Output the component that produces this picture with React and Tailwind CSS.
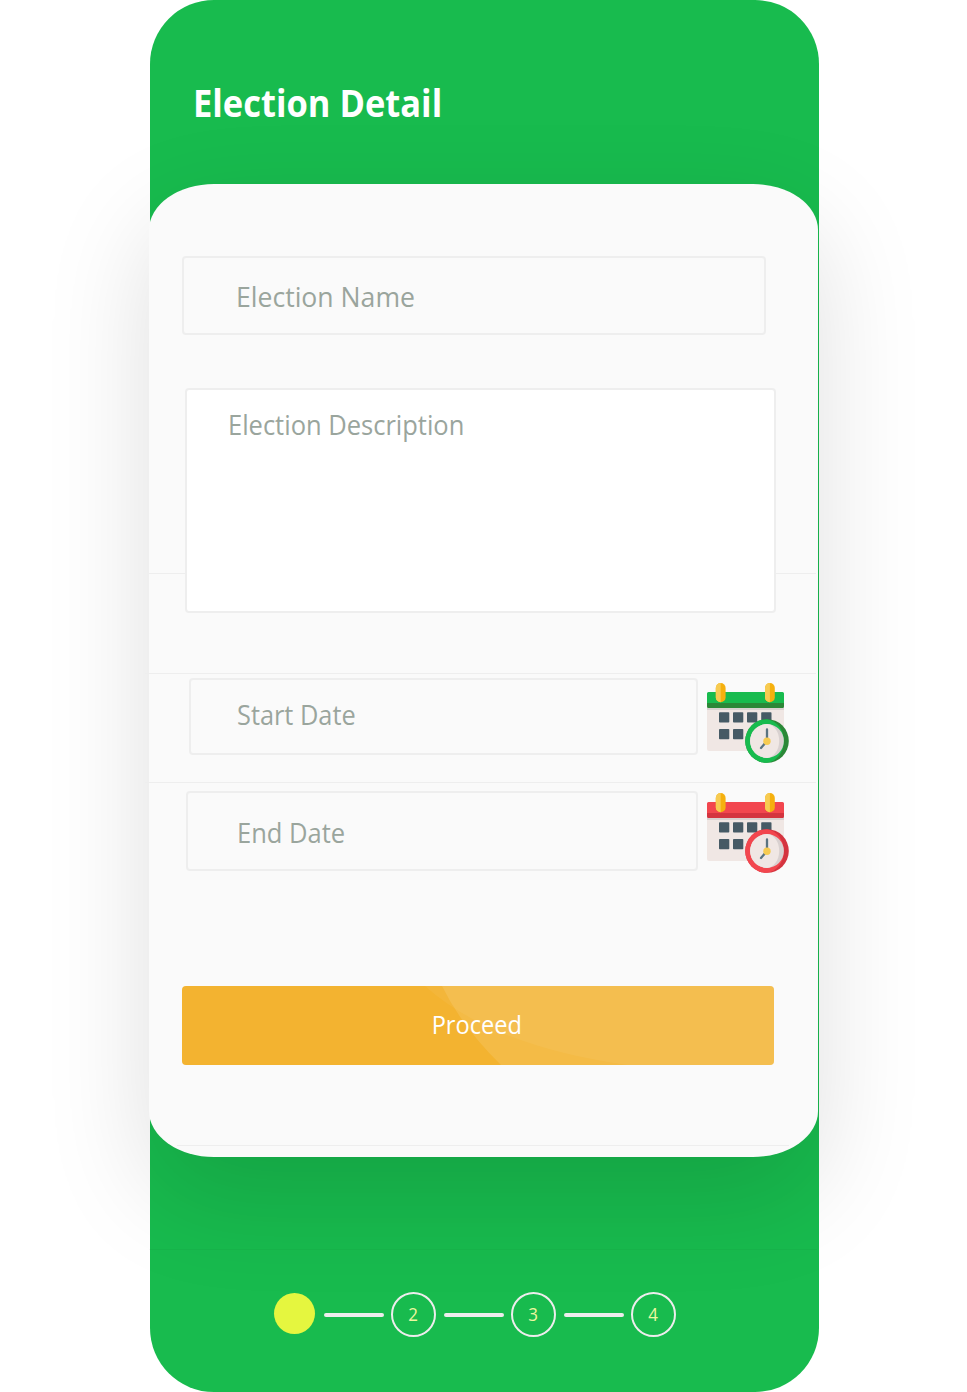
const palettes = {
  green: { main: "#18bb4e", dark: "#2b8737" },
  red: { main: "#f2464e", dark: "#d4343f" },
};

function CalendarIcon({ tone }) {
  const { main, dark } = palettes[tone];
  const cells = [
    [12, 29.3], [26, 29.3], [40, 29.3], [54.2, 29.3],
    [12, 46], [26, 46],
  ];
  return (
    <svg width="82" height="80" viewBox="0 0 82 80" className="shrink-0">
      <path d="M0 24h77v44H2a2 2 0 0 1-2-2z" fill="#f0e7e4" />
      <path d="M0 24h77v3H0z" fill="#d9d1d0" />
      <path d="M1.500 9h74A1.500 1.500 0 0 1 77 10.500V22H0V10.500A1.500 1.500 0 0 1 1.500 9z" fill={main} />
      <path d="M0 20h77v3.500a1.500 1.500 0 0 1-1.500 1.500h-74A1.500 1.500 0 0 1 0 23.500z" fill={dark} />
      {[8.8, 58].map((x) => (
        <g key={x}>
          <rect x={x} y="0" width="9.800" height="19.300" rx="4.900" fill="#f5b00e" />
          <path d={`M${x + 4.9} 0a4.900 4.900 0 0 0-4.900 4.900v9.500a4.900 4.900 0 0 0 4.900 4.900z`} fill="#f7cb51" />
        </g>
      ))}
      {cells.map(([x, y]) => (
        <rect key={`${x}-${y}`} x={x} y={y} width="10.300" height="10.300" rx="0.800" fill="#465a65" />
      ))}
      <circle cx="60" cy="58" r="21.800" fill={dark} />
      <path d="M60 36.200a21.800 21.800 0 1 0 0 43.600c9-1 17-10 17-21.800s-8-20.800-17-21.800z" fill={main} />
      <circle cx="60" cy="58" r="16.900" fill="#d9d1d0" />
      <path d="M60 41.100a16.900 16.900 0 1 0 0 33.800c7-.5 12.200-8 12.200-16.900S67 41.600 60 41.100z" fill="#f0e7e4" />
      <path d="M60 46.500V58l-6 7" fill="none" stroke="#5a7380" strokeWidth="2.300" strokeLinecap="round" />
      <circle cx="60" cy="58.200" r="3.700" fill="#f7cb51" />
    </svg>
  );
}

function Step({ number }) {
  return (
    <>
      <div className="ml-2 h-1 w-[60px] rounded-full bg-[#ededed]" />
      <div className="ml-[7px] flex h-[45px] w-[45px] items-center justify-center rounded-full border-2 border-[#ededed] pb-0.5 text-[18px] leading-none text-[#eef7a0]">
        <span className="inline-block origin-center scale-x-[0.94]">{number}</span>
      </div>
    </>
  );
}

function Divider({ className }) {
  return <div className={`absolute h-px bg-[#eeeeee] ${className}`} />;
}

export default function App() {
  return (
    <div className="h-[1392px] w-[967px] overflow-hidden bg-white font-['Open_Sans',sans-serif]">
      <main className="ml-[149.5px] flex h-[1391.5px] w-[669.5px] flex-col rounded-[64px] bg-[#18bb4e]">
        <header className="h-[183.5px] pl-[43px] pt-[78px]">
          <h1 className="w-max origin-left scale-x-[0.932] whitespace-nowrap text-[37px] font-bold leading-[50px] text-white">Election Detail</h1>
        </header>

        <section className="relative -ml-px h-[973.5px] w-[669.5px] shrink-0 rounded-[65px/46px] bg-[#fafafa] pt-[72.5px] shadow-[0_38px_106px_rgba(0,0,0,0.13)]">
          <Divider className="left-0 top-[389.5px] w-[667px]" />
          <Divider className="-left-1 top-[489.5px] w-[671px]" />
          <Divider className="-left-1 top-[598.5px] w-[671px]" />
          <Divider className="left-[28px] top-[961.5px] w-[612px]" />

          <div className="ml-[33px] flex h-[79px] w-[584px] items-center rounded-[4px] border-2 border-[#eeeeee] pl-[52px] pt-px text-[28px] leading-none text-[#9aa59d]">
            <span className="origin-left scale-x-[0.95] whitespace-nowrap">Election Name</span>
          </div>

          <div className="relative ml-9 mt-[53px] h-[225px] w-[591px] rounded-[4px] border-2 border-[#eeeeee] bg-white pl-[41px] pt-[19px] text-[27px] leading-8 text-[#9aa59d]">
            <span className="inline-block origin-left scale-x-[0.944] whitespace-nowrap">Election Description</span>
          </div>

          <div className="ml-10 mt-[65px] flex items-start">
            <div className="flex h-[77px] w-[509px] items-center rounded-[4px] border-2 border-[#eeeeee] pb-1 pl-[46px] text-[27px] leading-none text-[#9aa59d]">
              <span className="origin-left scale-x-[0.938] whitespace-nowrap">Start Date</span>
            </div>
            <div className="ml-[9px] mt-[5px]"><CalendarIcon tone="green" /></div>
          </div>

          <div className="ml-[37px] mt-7 flex items-start">
            <div className="flex h-20 w-[512px] items-center rounded-[4px] border-2 border-[#eeeeee] pl-[49px] pt-0.5 text-[27px] leading-none text-[#9aa59d]">
              <span className="origin-left scale-x-[0.945] whitespace-nowrap">End Date</span>
            </div>
            <div className="ml-[9px] mt-[2px]"><CalendarIcon tone="red" /></div>
          </div>

          <button className="relative ml-[33px] mt-[113px] flex h-[79px] w-[592px] items-center justify-center overflow-hidden rounded-[4px] bg-[#f3b330] text-[25px] leading-none text-white">
            <svg width="592" height="79" viewBox="0 0 592 79" className="absolute inset-0">
              <path d="M243 0Q310 60 445 79H592V0z" fill="#ffffff" fillOpacity="0.050" />
              <path d="M260 0Q280 41 319 79H592V0z" fill="#ffffff" fillOpacity="0.110" />
            </svg>
            <span className="relative right-px bottom-px scale-x-[0.945] whitespace-nowrap">Proceed</span>
          </button>
          <div className="absolute left-0 top-[1065.5px] h-px w-[668px] bg-black/3" />
        </section>

        <footer className="flex items-center pl-[124px] pt-[135px]">
          <div className="-mt-[2px] mr-px h-[41px] w-[41px] rounded-full bg-[#e5f63f]" />
          <Step number={2} />
          <Step number={3} />
          <Step number={4} />
        </footer>
      </main>
    </div>
  );
}
